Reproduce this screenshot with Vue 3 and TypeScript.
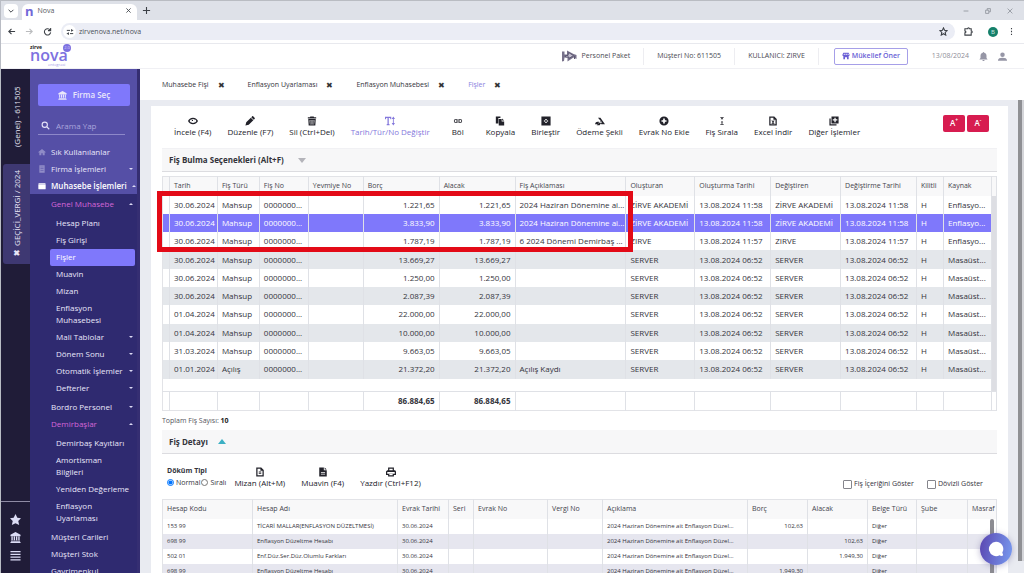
<script setup lang="ts">
import { ref } from 'vue'

interface Tool { label: string; icon: string; active?: boolean }
interface MenuItem { label: string; kind: 'group' | 'leaf'; accent?: boolean; arrow?: 'up' | 'down'; active?: boolean }
interface Voucher { date: string; type: string; amount: string; text: string; by: string; at: string; source: string }
interface Detail { code: string; name: string; debit: string; credit: string }

const icons: Record<string, string> = {
  eye: 'M12 4C6 4 2 8 0 12c2 4 6 8 12 8s10-4 12-8c-2-4-6-8-12-8zm0 3a5 5 0 1 1 0 10 5 5 0 0 1 0-10zM4 12c1-2 2-3 4-4-1 3-1 5 0 8-2-1-3-2-4-4zm16 0c-1 2-2 3-4 4 1-3 1-5 0-8 2 1 3 2 4 4zm-8-3a3 3 0 0 0-3 3h3z',
  pencil: 'M1 23l2-8L14 4l6 6L9 21zM15 3l2-2c1-1 2-1 3 0l3 3c1 1 1 2 0 3l-2 2z',
  trash: 'M8 1h8l1 2h5v3H2V3h5zM3 7h18l-1 16H4zm3 3l1 10h10l1-10zm2 1h2v8H8zm3 0h2v8h-2zm3 0h2v8h-2z',
  text: 'M0 2h15v6h-2l-1-3H9v14l2 1v2H4v-2l2-1V5H3L2 8H0zM20 1l4 6h-3v10h3l-4 6-4-6h3V7h-3z',
  link: 'M7 7h4v2H7a3 3 0 0 0 0 6h4v2H7A5 5 0 0 1 7 7zm6 0h4a5 5 0 0 1 0 10h-4v-2h4a3 3 0 0 0 0-6h-4zM7 11h10v2H7z',
  copy: 'M2 1h11v4H8v13H2zM9 7h7v6h6v10H9zm8-1l5 5h-5z',
  merge: 'M1 1h22v22H1zm9 6v3H7v4h3v3h4v-3h3v-4h-3V7zm1 2h2v2h2v2h-2v2h-2v-2H9v-2h2z',
  pay: 'M0 20c1-4 3-6 6-6h4l-3 6zM7 4h6l11 16h-9l-1-4h-4l4-4zM4 22l9-8h4l-6 8z',
  plus: 'M12 1a11 11 0 1 1 0 22 11 11 0 0 1 0-22zm-2 5v4H6v4h4v4h4v-4h4v-4h-4V6z',
  sort: 'M8 3h8v2h-3l2 3H9l2-3H8zm3 12H9l3-3 3 3h-2v4h3v2H8v-2h3z',
  doc: 'M3 1h12l6 6v16H3zm3 3v16h12V9h-5V4zm3 7h6v2H9zm0 4h6v2H9z',
  docFull: 'M3 1h11v7h7v15H3zm13 0l5 5h-5zM7 12v2h10v-2zm0 4v2h10v-2z',
  excel: 'M3 1h12l6 6v16H3zm3 3v16h12V9h-5V4zm2 7h3l1 2 1-2h3l-3 4 3 4h-3l-1-2-1 2H8l3-4z',
  more: 'M6 1h17v17H6zm7 3v4H9v3h4v4h3v-4h4V8h-4V4zM1 6h3v14h14v3H1z',
  print: 'M5 1h14v7h3l2 3v8h-5v4H5v-4H0v-8l3-3h2zm3 3v4h8V4zM3 12v4h18v-4zm5 5v3h8v-3z',
  bank: 'M12 0l11 6v3H1V6zM3 10h3v8H3zm5 0h3v8H8zm5 0h3v8h-3zm5 0h3v8h-3zM2 19h20v2H2zm-1 3h22v2H1z',
  star: 'M12 0l4 8 8 1-6 6 2 9-8-4-8 4 2-9-6-6 8-1z',
  bars: 'M1 2h22v3H1zm0 6h22v3H1zm0 6h22v3H1zm0 6h22v3H1z',
  home: 'M12 3l11 9-1 2-2-1v9h-6v-6h-4v6H4v-9l-2 1-1-2z',
  building: 'M4 1h16v22H4zm4 4v2h3V5zm5 0v2h3V5zM8 10v2h3v-2zm5 0v2h3v-2zm-5 5v2h3v-2zm5 0v2h3v-2z',
  folder: 'M1 5c0-1 1-2 2-2h18c1 0 2 1 2 2H1zm0 2h22v13c0 1-1 2-2 2H3c-1 0-2-1-2-2z',
  shop: 'M4 2h16l3 7c0 2-1 3-3 3v10h-5v-6H9v6H4V12c-2 0-3-1-3-3zm2 3L5 9h3V5zm5 0v4h3V5zm6 0v4h3l-1-4z',
  bell: 'M12 0c1 0 2 1 2 2 4 1 6 4 6 8v6l3 4H1l3-4v-6c0-4 2-7 6-8 0-1 1-2 2-2zM9 21h6c0 4-6 4-6 0z',
  user: 'M12 1a6 6 0 1 1 0 12 6 6 0 0 1 0-12zM0 22c0-5 5-7 12-7s12 2 12 7v1H0z',
}

const openTabs = ['Muhasebe Fişi', 'Enflasyon Uyarlaması', 'Enflasyon Muhasebesi', 'Fişler']
const tools: Tool[] = [
  { label: 'İncele (F4)', icon: 'eye' },
  { label: 'Düzenle (F7)', icon: 'pencil' },
  { label: 'Sil (Ctrl+Del)', icon: 'trash' },
  { label: 'Tarih/Tür/No Değiştir', icon: 'text', active: true },
  { label: 'Böl', icon: 'link' },
  { label: 'Kopyala', icon: 'copy' },
  { label: 'Birleştir', icon: 'merge' },
  { label: 'Ödeme Şekli', icon: 'pay' },
  { label: 'Evrak No Ekle', icon: 'plus' },
  { label: 'Fiş Sırala', icon: 'sort' },
  { label: 'Excel İndir', icon: 'excel' },
  { label: 'Diğer İşlemler', icon: 'more' },
]
const detailTools: Tool[] = [
  { label: 'Mizan (Alt+M)', icon: 'doc' },
  { label: 'Muavin (F4)', icon: 'docFull' },
  { label: 'Yazdır (Ctrl+F12)', icon: 'print' },
]
const menuSections: MenuItem[][] = [
  [{ label: 'Genel Muhasebe', kind: 'group', accent: true, arrow: 'up' }],
  [
    { label: 'Hesap Planı', kind: 'leaf' },
    { label: 'Fiş Girişi', kind: 'leaf' },
    { label: 'Fişler', kind: 'leaf', active: true },
    { label: 'Muavin', kind: 'leaf' },
    { label: 'Mizan', kind: 'leaf' },
    { label: 'Enflasyon Muhasebesi', kind: 'leaf' },
    { label: 'Mali Tablolar', kind: 'leaf', arrow: 'down' },
    { label: 'Dönem Sonu', kind: 'leaf', arrow: 'down' },
    { label: 'Otomatik İşlemler', kind: 'leaf', arrow: 'down' },
    { label: 'Defterler', kind: 'leaf', arrow: 'down' },
  ],
  [
    { label: 'Bordro Personel', kind: 'group', arrow: 'down' },
    { label: 'Demirbaşlar', kind: 'group', accent: true, arrow: 'up' },
  ],
  [
    { label: 'Demirbaş Kayıtları', kind: 'leaf' },
    { label: 'Amortisman Bilgileri', kind: 'leaf' },
    { label: 'Yeniden Değerleme', kind: 'leaf' },
    { label: 'Enflasyon Uyarlaması', kind: 'leaf' },
  ],
  [
    { label: 'Müşteri Carileri', kind: 'group' },
    { label: 'Müşteri Stok', kind: 'group' },
    { label: 'Gayrimenkul', kind: 'group' },
  ],
]

const voucherCols = [7, 48, 42, 49, 55, 76, 76, 111, 69, 76, 70, 76, 27, 48, 5]
const voucherHeads = ['', 'Tarih', 'Fiş Türü', 'Fiş No', 'Yevmiye No', 'Borç', 'Alacak', 'Fiş Açıklaması', 'Oluşturan', 'Oluşturma Tarihi', 'Değiştiren', 'Değiştirme Tarihi', 'Kilitli', 'Kaynak', '']
const server = (date: string, amount: string, type = 'Mahsup', text = ''): Voucher =>
  ({ date, type, amount, text, by: 'SERVER', at: '13.08.2024 06:52', source: 'Masaüst...' })
const vouchers: Voucher[] = [
  { date: '30.06.2024', type: 'Mahsup', amount: '1.221,65', text: '2024 Haziran Dönemine ai...', by: 'ZİRVE AKADEMİ', at: '13.08.2024 11:58', source: 'Enflasyo...' },
  { date: '30.06.2024', type: 'Mahsup', amount: '3.833,90', text: '2024 Haziran Dönemine ai...', by: 'ZİRVE AKADEMİ', at: '13.08.2024 11:58', source: 'Enflasyo...' },
  { date: '30.06.2024', type: 'Mahsup', amount: '1.787,19', text: '6 2024 Dönemi Demirbaş ...', by: 'ZIRVE', at: '13.08.2024 11:57', source: 'Enflasyo...' },
  server('30.06.2024', '13.669,27'),
  server('30.06.2024', '1.250,00'),
  server('30.06.2024', '2.087,39'),
  server('01.04.2024', '22.000,00'),
  server('01.04.2024', '10.000,00'),
  server('31.03.2024', '9.663,05'),
  server('01.01.2024', '21.372,20', 'Açılış', 'Açılış Kaydı'),
]
const selected = ref(1)

const detailCols = [90, 145, 51, 25, 74, 55, 145, 60, 60, 49, 51, 29]
const detailHeads = ['Hesap Kodu', 'Hesap Adı', 'Evrak Tarihi', 'Seri', 'Evrak No', 'Vergi No', 'Açıklama', 'Borç', 'Alacak', 'Belge Türü', 'Şube', 'Masraf']
const details: Detail[] = [
  { code: '153 99', name: 'TİCARİ MALLAR(ENFLASYON DÜZELTMESİ)', debit: '102,63', credit: '' },
  { code: '698 99', name: 'Enflasyon Düzeltme Hesabı', debit: '', credit: '102,63' },
  { code: '502 01', name: 'Enf.Düz.Ser.Düz.Olumlu Farkları', debit: '', credit: '1.949,30' },
  { code: '698 99', name: 'Enflasyon Düzeltme Hesabı', debit: '1.949,30', credit: '' },
]
const listing = ref('normal')
const search = ref('')
</script>

<template>
  <div class="window">
    <div class="tabstrip">
      <button class="tab-list" aria-label="Sekmeler"><svg viewBox="0 0 10 10"><path d="M2 3.500l3 3 3-3" /></svg></button>
      <div class="browser-tab">
        <b class="favicon">n</b><span>Nova</span>
        <button class="line-btn" aria-label="Sekmeyi kapat"><svg viewBox="0 0 10 10"><path d="M2 2l6 6M8 2l-6 6" /></svg></button>
      </div>
      <button class="line-btn new-tab" aria-label="Yeni sekme"><svg viewBox="0 0 10 10"><path d="M5 1v8M1 5h8" /></svg></button>
      <div class="window-buttons">
        <button class="line-btn" aria-label="Küçült"><svg viewBox="0 0 10 10"><path d="M2 5h6" /></svg></button>
        <button class="line-btn" aria-label="Geri yükle"><svg viewBox="0 0 10 10"><path d="M2 4h4v4H2zM4 4V2h4v4H6" /></svg></button>
        <button class="line-btn" aria-label="Kapat"><svg viewBox="0 0 10 10"><path d="M2 2l6 6M8 2l-6 6" /></svg></button>
      </div>
    </div>
    <div class="addressbar">
      <button class="line-btn" aria-label="Geri"><svg viewBox="0 0 10 10"><path d="M9 5H2M5 2L2 5l3 3" /></svg></button>
      <button class="line-btn faint" aria-label="İleri"><svg viewBox="0 0 10 10"><path d="M1 5h7M5 2l3 3-3 3" /></svg></button>
      <button class="line-btn" aria-label="Yenile"><svg viewBox="0 0 10 10"><path d="M8 3.500A3.500 3.500 0 1 0 8.500 6M8.500 1v3h-3" /></svg></button>
      <div class="omnibox">
        <span class="site-info"><svg viewBox="0 0 10 10"><path d="M1 3h4M7 1.500v3M7 3h2M5 7h4M3 5.500v3M1 7h2" /></svg></span>
        <input aria-label="Adres" value="zirvenova.net/nova" />
        <button class="line-btn" aria-label="Yer işareti"><svg viewBox="0 0 10 10"><path d="M5 1l1.200 2.700 2.800.3-2.100 2 .6 3L5 7.500 2.500 9l.6-3L1 4l2.800-.3z" /></svg></button>
      </div>
      <button class="line-btn ext" aria-label="Uzantılar"><svg viewBox="0 0 10 10"><path d="M1 2h3c0-1.500 2-1.500 2 0h2v2.500c1.500 0 1.500 2 0 2V9H1V6.500c1.500 0 1.500-2 0-2z" /></svg></button>
      <button class="profile" aria-label="Profil">B</button>
      <button class="line-btn" aria-label="Menü"><svg viewBox="0 0 10 10"><path d="M5 1v1.500M5 4.300v1.500M5 7.500V9" /></svg></button>
    </div>

    <header class="topbar">
      <a href="#" class="logo" aria-label="zirve nova">
        <small class="logo-top">zirve</small>
        <span class="logo-main">nova</span>
        <small class="logo-badge">2.0</small>
        <small class="logo-sub">entegrasi</small>
      </a>
      <div class="top-info">
        <div class="info-cell">
          <svg class="packet" viewBox="0 0 34 24"><path d="M2 3h5v6h5V1l13 7 6 2v8l-6-3-12 8v-8H7l-1 7-4 1z" fill="#77718a" /><path d="M9 11h5l1-6 10 6-9 6v-3H9zM27 12v6" fill="#c4c0d0" stroke="#5d5872" stroke-width="2" /></svg>
          Personel Paket
        </div>
        <div class="info-cell">Müşteri No: 611505</div>
        <div class="info-cell">KULLANICI: ZIRVE</div>
        <button class="suggest"><svg viewBox="0 0 24 24"><path fill-rule="evenodd" :d="icons.shop" /></svg>Mükellef Öner</button>
        <time>13/08/2024</time>
        <button class="top-icon" aria-label="Bildirimler"><svg viewBox="0 0 24 24"><path :d="icons.bell" /></svg></button>
        <button class="top-icon" aria-label="Hesap"><svg viewBox="0 0 24 24"><path :d="icons.user" /></svg></button>
      </div>
    </header>

    <div class="body">
      <aside class="rail">
        <button class="rail-tab plain">(Genel) - 611505</button>
        <button class="rail-tab current"><b>✖</b> GEÇİCİ_VERGİ / 2024</button>
        <div class="rail-foot">
          <button v-for="name in ['star', 'bank', 'bars']" :key="name" :aria-label="name">
            <svg viewBox="0 0 24 24"><path fill-rule="evenodd" :d="icons[name]" /></svg>
          </button>
        </div>
      </aside>

      <nav class="sidebar">
        <div class="side-top">
          <button class="pick"><svg viewBox="0 0 24 24"><path :d="icons.bank" /></svg>Firma Seç</button>
          <label class="search">
            <svg viewBox="0 0 12 12"><circle cx="5" cy="5" r="3.500" /><path d="M8 8l3 3" /></svg>
            <input v-model="search" placeholder="Arama Yap" aria-label="Arama Yap" />
          </label>
          <a href="#" class="root-item"><svg class="dim" viewBox="0 0 24 24"><path :d="icons.home" /></svg>Sık Kullanılanlar</a>
          <a href="#" class="root-item"><svg class="dim" viewBox="0 0 24 24"><path fill-rule="evenodd" :d="icons.building" /></svg>Firma İşlemleri<i class="arrow down"></i></a>
          <a href="#" class="root-item open"><svg viewBox="0 0 24 24"><path :d="icons.folder" /></svg>Muhasebe İşlemleri<i class="arrow up"></i></a>
        </div>
        <div class="side-menu">
          <ul v-for="(section, s) in menuSections" :key="s">
            <li v-for="item in section" :key="item.label">
              <a href="#" :class="[item.kind, { accent: item.accent, active: item.active }]">
                <span>{{ item.label }}</span><i v-if="item.arrow" class="arrow" :class="item.arrow"></i>
              </a>
            </li>
          </ul>
        </div>
      </nav>

      <section class="content">
        <div class="page-tabs">
          <div v-for="(tab, i) in openTabs" :key="tab" class="page-tab" :class="{ current: i === 3 }">
            <a href="#">{{ tab }}</a><button :aria-label="tab + ' kapat'">✖</button>
          </div>
        </div>
        <div class="scroller">
          <main class="card">
            <div class="toolbar">
              <button v-for="tool in tools" :key="tool.label" class="tool" :class="{ on: tool.active }">
                <svg viewBox="0 0 24 24"><path fill-rule="evenodd" :d="icons[tool.icon]" /></svg>{{ tool.label }}
              </button>
              <div class="zoomers"><button>A<sup>+</sup></button><button>A<sup>-</sup></button></div>
            </div>

            <h2 class="bar">Fiş Bulma Seçenekleri (Alt+F)<i class="tri"></i></h2>

            <div class="grid-wrap">
              <table class="vouchers">
                <colgroup><col v-for="(w, i) in voucherCols" :key="i" :style="{ width: w / 8.35 + '%' }" /></colgroup>
                <thead><tr><th v-for="(h, i) in voucherHeads" :key="i">{{ h }}</th></tr></thead>
                <tbody>
                  <tr v-for="(v, i) in vouchers" :key="i" :class="{ selected: i === selected }" @click="selected = i">
                    <td></td><td>{{ v.date }}</td><td>{{ v.type }}</td><td>0000000...</td><td></td>
                    <td class="num">{{ v.amount }}</td><td class="num">{{ v.amount }}</td><td>{{ v.text }}</td>
                    <td>{{ v.by }}</td><td>{{ v.at }}</td><td>{{ v.by }}</td><td>{{ v.at }}</td><td>H</td><td>{{ v.source }}</td><td class="gutter"></td>
                  </tr>
                </tbody>
                <tfoot>
                  <tr class="filler"><td colspan="14"></td><td class="gutter"></td></tr>
                  <tr class="totals"><td v-for="n in 15" :key="n" :class="{ num: n === 6 || n === 7 }">{{ n === 6 || n === 7 ? '86.884,65' : '' }}</td></tr>
                </tfoot>
              </table>
              <div class="marker"></div>
            </div>
            <p class="count">Toplam Fiş Sayısı: <b>10</b></p>

            <h2 class="bar second">Fiş Detayı<i class="tri open"></i></h2>

            <div class="detail-tools">
              <fieldset>
                <legend>Döküm Tipi</legend>
                <label><input v-model="listing" type="radio" value="normal" />Normal</label>
                <label><input v-model="listing" type="radio" value="sirali" />Sıralı</label>
              </fieldset>
              <button v-for="tool in detailTools" :key="tool.label" class="tool">
                <svg viewBox="0 0 24 24"><path fill-rule="evenodd" :d="icons[tool.icon]" /></svg>{{ tool.label }}
              </button>
              <div class="checks">
                <label><input type="checkbox" />Fiş İçeriğini Göster</label>
                <label><input type="checkbox" />Dövizli Göster</label>
              </div>
            </div>

            <div class="detail-wrap">
              <table class="details">
                <colgroup><col v-for="(w, i) in detailCols" :key="i" :style="{ width: w / 8.34 + '%' }" /></colgroup>
                <thead><tr><th v-for="h in detailHeads" :key="h">{{ h }}</th></tr></thead>
                <tbody>
                  <tr v-for="(d, i) in details" :key="i">
                    <td>{{ d.code }}</td><td>{{ d.name }}</td><td>30.06.2024</td><td></td><td></td><td></td>
                    <td>2024 Haziran Dönemine ait Enflasyon Düzel...</td>
                    <td class="num">{{ d.debit }}</td><td class="num">{{ d.credit }}</td><td>Diğer</td><td></td><td></td>
                  </tr>
                </tbody>
              </table>
              <div class="detail-thumb"></div>
            </div>
          </main>
          <div class="page-thumb"></div>
        </div>
      </section>
    </div>
    <button class="chat" aria-label="Sohbet"><svg viewBox="0 0 20 20"><path d="M10 2a8 8 0 1 0 4 15c1 1 3 1 4 0l-1-3A8 8 0 0 0 10 2z" /></svg></button>
  </div>
</template>

<style>
body { margin: 0; overflow: hidden; }
</style>

<style scoped>
* { box-sizing: border-box; }
.window {
  display: flex; flex-direction: column; height: 100vh; overflow: hidden;
  font: 8px/12px "Open Sans", "Noto Sans", sans-serif; color: #34343c; background: #fff;
  border-left: 1px solid #b9bcc4;
}
button, input { font: inherit; color: inherit; border: 0; background: none; padding: 0; margin: 0; }
button { cursor: pointer; }
a { color: inherit; text-decoration: none; }
ul { list-style: none; margin: 0; padding: 0; }
svg { display: block; fill: currentColor; flex: none; }

.tabstrip { display: flex; align-items: center; height: 20px; background: #dee1e8; border-top: 1px solid #b9bcc2; font-size: 7px; flex: none; }
.tab-list { width: 14px; height: 14px; margin: 0 4px 0 3px; border-radius: 4px; background: #fff; display: grid; place-items: center; }
.tab-list svg, .line-btn svg, .site-info svg { width: 8px; height: 8px; fill: none; stroke: #3c4046; stroke-width: 1.2; }
.line-btn svg { width: 9px; height: 9px; }
.browser-tab { display: flex; align-items: center; align-self: stretch; width: 115px; margin-top: 3px; padding: 0 5px 3px 3px; background: #fff; border-radius: 6px 6px 0 0; color: #55585e; }
.favicon { font-size: 13px; color: #7268d8; margin-right: 4px; }
.browser-tab .line-btn { margin-left: auto; }
.browser-tab .line-btn svg { width: 7px; height: 7px; }
.new-tab { margin-left: 5px; }
.window-buttons { display: flex; gap: 14px; margin-left: auto; padding-right: 10px; }
.window-buttons svg { width: 8px; height: 8px; stroke: #8b9098; stroke-width: 1; }

.addressbar { display: flex; align-items: center; height: 24px; padding: 0 8px 0 6px; gap: 9px; flex: none; border-bottom: 1px solid #e8e9ee; }
.faint { opacity: .35; }
.omnibox { display: flex; align-items: center; flex: 1; height: 17px; padding: 0 7px 0 2px; border-radius: 9px; background: #ebedf5; font-size: 7px; }
.site-info { display: grid; place-items: center; width: 13px; height: 13px; border-radius: 50%; background: #fff; }
.omnibox input { flex: 1; margin-left: 3px; color: #4c5058; outline: 0; }
.ext { margin: 0 6px 0 0; }
.profile { width: 10px; height: 10px; border-radius: 50%; background: #15806a; color: #cfe9e2; font-size: 6px; line-height: 10px; }

.topbar { display: flex; justify-content: space-between; height: 25px; flex: none; border-bottom: 1px solid #f0f0f4; font-size: 7px; color: #4a4a52; }
.logo { position: relative; width: 44px; height: 24px; margin-left: 29px; color: #7d71e0; }
.logo-main { position: absolute; left: 0; top: 1px; font-size: 16px; line-height: 20px; font-weight: 600; }
.logo-top { position: absolute; left: 0; top: 0; font-size: 5px; line-height: 6px; font-weight: 700; color: #222; }
.logo-badge { position: absolute; right: 3px; top: 0; width: 8px; height: 8px; border-radius: 50%; background: #7d71e0; color: #d8d3ff; font-size: 4px; line-height: 8px; text-align: center; }
.logo-sub { position: absolute; left: 18px; top: 18px; font-size: 4px; line-height: 5px; color: #a49be8; }
.top-info { display: flex; align-items: center; padding-right: 17px; }
.info-cell { display: flex; align-items: center; gap: 4px; height: 17px; padding: 0 13px; border-right: 1px solid #ededf1; }
.packet { width: 17px; height: 12px; }
.suggest { display: flex; align-items: center; justify-content: center; gap: 2px; width: 74px; height: 17px; margin: 0 24px 0 15px; border: 1px solid #a69fe8; border-radius: 2px; color: #6a5fd6; font-weight: 600; }
.suggest svg { width: 8px; height: 8px; }
time { color: #8e8e98; }
.top-icon { margin-left: 10px; color: #9696a6; }
.top-icon svg { width: 9px; height: 9px; }

.body { display: flex; flex: 1; min-height: 0; }
.rail { display: flex; flex-direction: column; align-items: flex-end; width: 29px; flex: none; background: #201c38; color: #e8e6f6; }
.rail-tab { writing-mode: vertical-rl; transform: rotate(180deg); width: 27px; }
.rail-tab.plain { height: 95px; }
.rail-tab.current { height: 100px; background: #3e3872; border-radius: 0 3px 3px 0; }
.rail-foot { display: flex; flex-direction: column; align-items: center; gap: 7px; width: 100%; margin-top: auto; padding: 12px 0 12px; border-top: 1px solid #8f8ba5; }
.rail-foot svg { width: 11px; height: 11px; fill: #dcdcf6; }

.sidebar { display: flex; flex-direction: column; width: 110px; flex: none; background: #2f2a70; border-right: 3px solid #352e72; color: #e9e7fa; overflow: hidden; }
.side-top { padding: 15px 0 0; background: #554fa6; flex: none; }
.pick { display: flex; align-items: center; justify-content: center; gap: 6px; width: 92px; height: 22px; margin: 0 8px; border-radius: 2px; background: #7f78fb; font-weight: 600; }
.pick svg { width: 9px; height: 9px; }
.search { display: flex; align-items: center; height: 18px; margin: 11px 12px 8px 8px; padding: 0 3px; gap: 6px; border-bottom: 1px solid #8d88c9; }
.search svg { width: 9px; height: 9px; fill: none; stroke: #e3e1f8; stroke-width: 1.5; }
.search input { width: 70px; outline: 0; }
.search input::placeholder { color: #aaa5dc; opacity: 1; }
.root-item { display: flex; align-items: center; gap: 5px; height: 17px; padding: 0 4px 0 8px; font-weight: 500; white-space: nowrap; }
.root-item.open { color: #fff; font-weight: 600; }
.root-item svg { width: 8px; height: 8px; }
.root-item svg.dim { opacity: .4; }
.arrow { margin-left: auto; flex: none; border: 2px solid transparent; }
.arrow.down { border-top: 2px solid #dcdaf4; border-bottom: 0; }
.arrow.up { border-bottom: 2px solid #dcdaf4; border-top: 0; }
.side-menu { flex: 1; min-height: 0; overflow: hidden; font-weight: 500; }
.side-menu ul { padding-top: 2px; }
.side-menu a { display: flex; align-items: center; margin: 0 2px 0 20px; padding: 2px 2px 3px 6px; border-radius: 2px; }
.side-menu .leaf span { max-width: 74px; }
.side-menu a.group { padding-left: 1px; }
.side-menu a.accent { color: #d466d8; }
.side-menu a.active { background: #7f78fb; color: #fff; }

.content { display: flex; flex-direction: column; flex: 1; min-width: 0; background: #e9ebf1; }
.page-tabs { display: flex; gap: 23px; height: 31px; flex: none; align-items: center; padding-left: 22px; background: #fff; font-size: 7px; }
.page-tab { display: flex; align-items: center; gap: 9px; }
.page-tab button { font-size: 8px; color: #333; }
.page-tab.current a { color: #8a7fe0; }
.scroller { display: flex; flex: 1; min-height: 0; }
.card { flex: 1; min-width: 0; margin: 6px 10px 0 11px; padding: 0 11px; background: #fff; overflow: hidden; }
.page-thumb { width: 6px; margin-bottom: 12px; flex: none; background: #8f9094; border-right: 2px solid #d4d5d9; }

.toolbar { display: flex; align-items: center; height: 43px; padding: 0 8px 0 4px; border-bottom: 1px solid #f1f1f4; }
.tool { display: flex; flex-direction: column; align-items: center; padding: 0 8px; min-width: 40px; font-weight: 500; white-space: nowrap; color: #22222a; }
.tool svg { width: 10px; height: 10px; }
.tool.on { color: #8478dc; }
.zoomers { display: flex; gap: 2px; margin: 0 0 8px auto; }
.zoomers button { width: 22px; height: 17px; border-radius: 2px; background: #d71c50; color: #fff; font-weight: 600; }
.zoomers sup { font-size: 5px; line-height: 0; }
.bar { display: flex; align-items: center; gap: 14px; height: 23px; margin: 0; padding: 0 7px; background: #f7f7f8; border-bottom: 1px solid #dcdce0; font-size: 8px; font-weight: 700; color: #33333a; }
.tri { border: 4px solid transparent; border-top: 5px solid #b4b4ba; border-bottom: 0; }
.tri.open { border-bottom: 5px solid #3cb0c4; border-top: 0; }

.grid-wrap { position: relative; margin-top: 4px; }
table { width: 100%; table-layout: fixed; border-collapse: collapse; }
th, td { padding: 0 4px; overflow: hidden; white-space: nowrap; text-align: left; border-right: 1px solid #dfe1e6; }
th { font-size: 7px; font-weight: 500; background: #f8f8f9; color: #44444c; }
.num { text-align: right; }
.vouchers { height: 235px; border: 1px solid #e2e3e7; }
.vouchers th { height: 19px; }
.vouchers td { font-weight: 500; }
.vouchers tbody tr:nth-child(n+4):nth-child(even) { background: #e4e7eb; }
.vouchers tbody tr.selected { background: #7f78fb; color: #fff; }
.vouchers .gutter { background: #dddee3; }
.vouchers .filler td { height: 13px; border-bottom: 1px solid #dfe1e6; }
.vouchers .totals td { height: 19px; font-weight: 700; }
.marker { position: absolute; left: -5px; top: 15px; width: 57%; height: 61px; border: 5px solid #e30a17; pointer-events: none; }
.count { margin: 4px 0 3px; font-size: 7px; color: #55555d; }
.count b { color: #222; }
.second { height: 24px; gap: 10px; }

.detail-tools { display: flex; align-items: center; height: 45px; padding-top: 2px; }
fieldset { border: 0; margin: 0; padding: 0 0 0 5px; font-size: 7px; }
legend { padding: 0; font-weight: 700; }
label { display: inline-flex; align-items: center; gap: 2px; white-space: nowrap; }
fieldset input { width: 7px; height: 7px; }
fieldset label + label { margin-left: 1px; }
.checks { display: flex; gap: 13px; margin: 13px 14px 0 auto; font-size: 7px; }
.checks input { width: 9px; height: 9px; appearance: none; border: 1px solid #85858c; border-radius: 1px; background: #fff; }
.checks input:checked { background: #7f78fb; }
.detail-wrap { position: relative; }
.details { border: 1px solid #e2e3e7; }
.details th { height: 19px; }
.details td { height: 15px; font-size: 6px; line-height: 10px; }
.details tbody tr:nth-child(even) { background: #e6e6ef; }
.detail-thumb { position: absolute; right: 3px; top: 20px; bottom: 0; width: 4px; background: #8c8c92; border-radius: 2px; }
.chat { position: fixed; right: 12px; bottom: 8px; display: grid; place-items: center; width: 32px; height: 32px; border-radius: 50%; background: linear-gradient(100deg, #5a45b0, #789bf0); box-shadow: 0 1px 6px rgba(60, 50, 120, .35); }
.chat svg { width: 18px; height: 18px; fill: #fff; }
</style>
